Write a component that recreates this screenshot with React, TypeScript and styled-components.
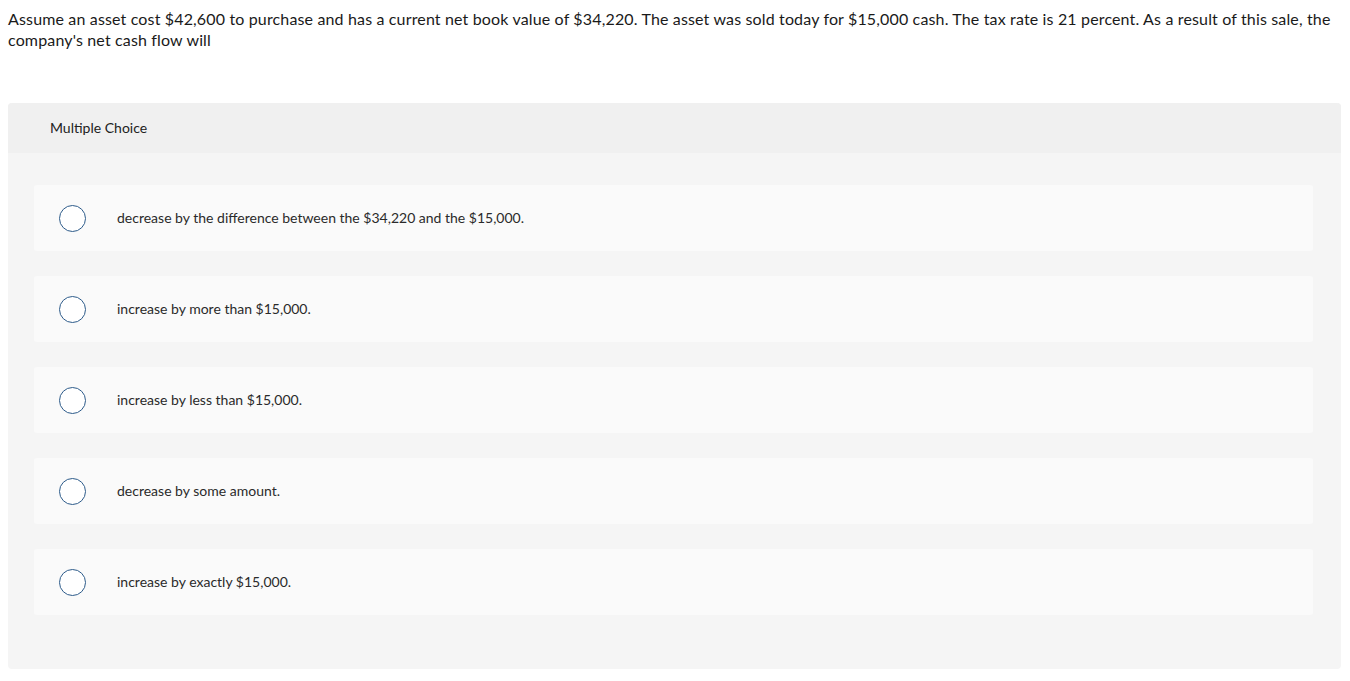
import React from 'react';
import styled, { createGlobalStyle } from 'styled-components';

const GlobalStyle = createGlobalStyle`
  body {
    margin: 0;
    background: #ffffff;
    font-family: Lato, "Open Sans", sans-serif;
    color: #1a1a1a;
  }
`;

const Page = styled.div`
  padding: 8px 9px 12px 8px;
`;

const Question = styled.p`
  margin: 0 0 53px 0;
  font-size: 16px;
  line-height: 21px;
  letter-spacing: 0.15px;
  color: #1a1a1a;
`;

const Panel = styled.div`
  background-color: #f5f5f5;
  border-radius: 4px;
  overflow: hidden;
`;

const PanelHeader = styled.div`
  height: 50px;
  display: flex;
  align-items: center;
  padding: 0 0 2px 42px;
  box-sizing: border-box;
  background-color: #f0f0f0;
  font-size: 14px;
  color: #222;
`;

const OptionList = styled.div`
  display: flex;
  flex-direction: column;
  gap: 25px;
  padding: 32px 28px 54px 26px;
`;

const Option = styled.label`
  height: 66px;
  display: flex;
  align-items: center;
  gap: 31px;
  padding: 0 0 2px 25px;
  box-sizing: border-box;
  background-color: #fafafa;
  border-radius: 3px;
  font-size: 14px;
  color: #2a2a2a;
  cursor: pointer;
`;

const Radio = styled.span`
  width: 25px;
  height: 25px;
  margin-top: 2px;
  border-radius: 50%;
  border: 1.5px solid #2d5b8a;
  background: #ffffff;
  flex-shrink: 0;
`;

const options = [
  'decrease by the difference between the $34,220 and the $15,000.',
  'increase by more than $15,000.',
  'increase by less than $15,000.',
  'decrease by some amount.',
  'increase by exactly $15,000.',
];

export default function App() {
  return (
    <Page>
      <GlobalStyle />
      <Question>
        Assume an asset cost $42,600 to purchase and has a current net book value of $34,220. The asset was sold today for
        $15,000 cash. The tax rate is 21 percent. As a result of this sale, the company's net cash flow will
      </Question>
      <Panel>
        <PanelHeader>Multiple Choice</PanelHeader>
        <OptionList>
          {options.map((text) => (
            <Option key={text}>
              <Radio />
              <span>{text}</span>
            </Option>
          ))}
        </OptionList>
      </Panel>
    </Page>
  );
}
